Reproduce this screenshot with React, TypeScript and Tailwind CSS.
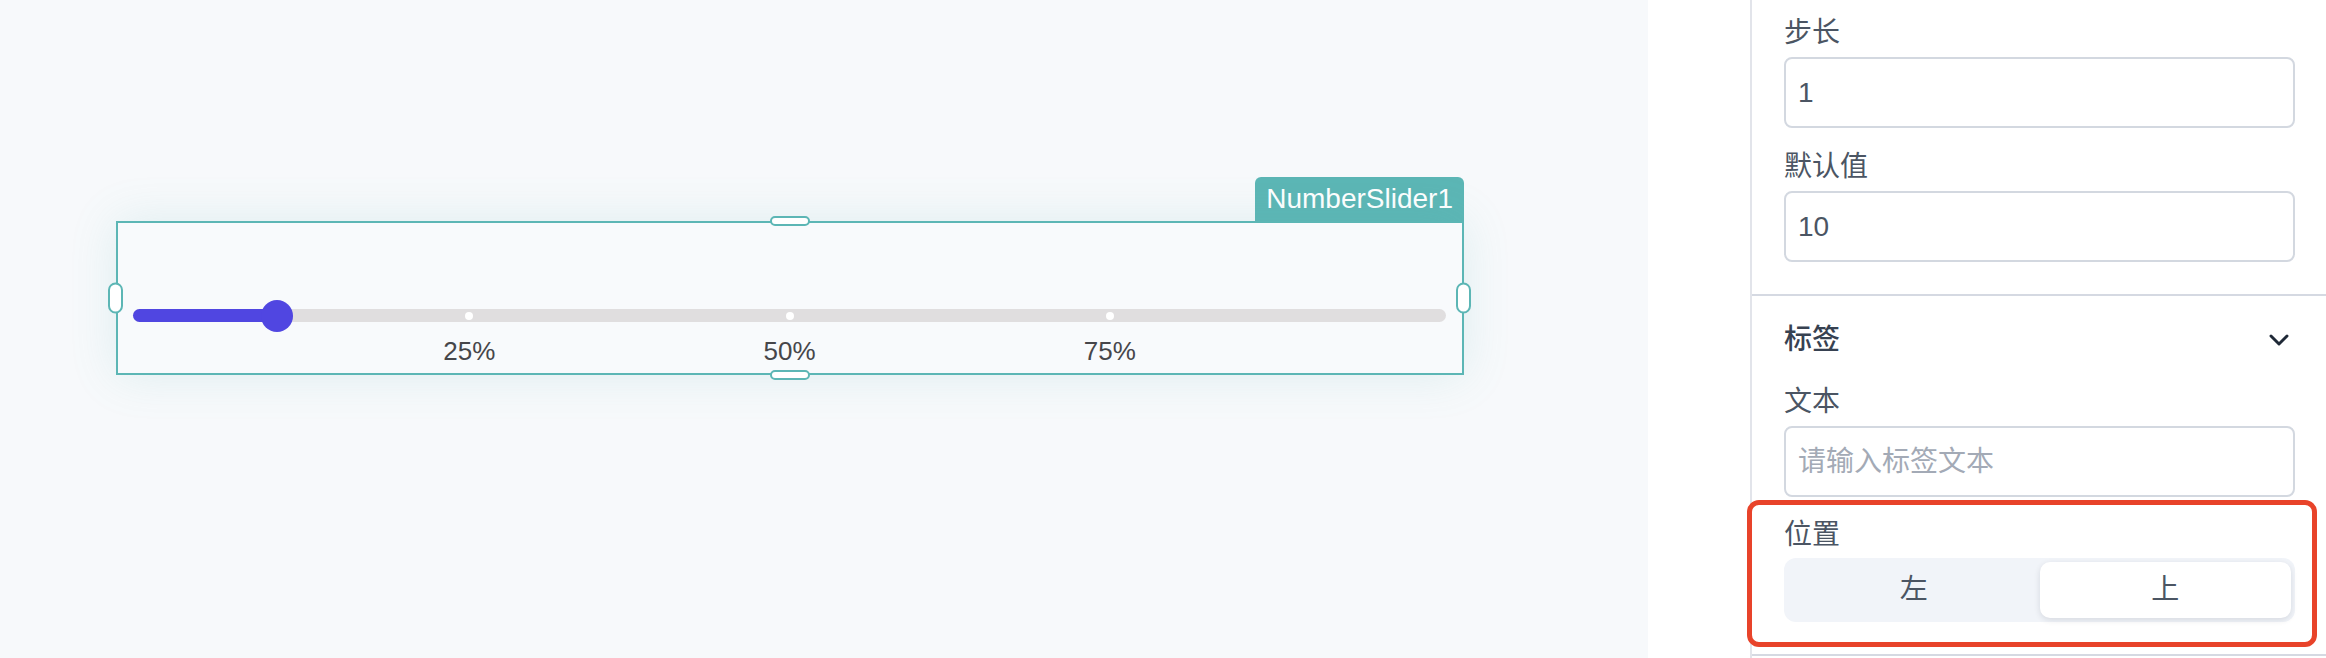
import React from 'react';
import { ChevronDown } from 'lucide-react';

const font = 'font-["Liberation_Sans","Noto_Sans_CJK_SC",sans-serif]';

const marks = [
  { label: '25%', pos: 'left-[25%]' },
  { label: '50%', pos: 'left-[50%]' },
  { label: '75%', pos: 'left-[75%]' },
];

const Handle: React.FC<{ className: string }> = ({ className }) => (
  <div className={`absolute bg-white border-2 border-[#5cb6b5] rounded-full ${className}`} />
);

const SliderWidget: React.FC = () => (
  <div className="w-[1348px]">
    <div className="flex justify-end">
      <div className="h-[44px] px-[11px] flex items-center rounded-t-[6px] bg-[#5cb6b5] text-white text-[28px] leading-none">
        NumberSlider1
      </div>
    </div>
    <div className="relative h-[154px] border-2 border-[#5cb6b5] bg-[#f8fafc] shadow-[0_0_44px_rgba(92,182,181,0.16)] pl-[15px] pr-4 pt-[86px]">
      {/* track */}
      <div className="relative h-[13px] rounded-full bg-[#e0dedf]">
        <div className="absolute inset-y-0 left-4 right-4">
          <div className="absolute inset-y-0 left-[-16px] w-[calc(10%+16px)] rounded-l-full bg-[#5046e1]" />
          {marks.map(m => (
            <div key={m.label} className={`absolute top-1/2 ${m.pos} w-2 h-2 -translate-x-1/2 -translate-y-1/2 rounded-full bg-white`} />
          ))}
          <div className="absolute top-1/2 left-[10%] w-8 h-8 -translate-x-1/2 -translate-y-1/2 rounded-full bg-[#5046e1]" />
        </div>
      </div>
      {/* marks */}
      <div className="relative h-9 mt-[11px]">
        <div className="absolute inset-y-0 left-4 right-4">
          {marks.map(m => (
            <span key={m.label} className={`absolute top-0 ${m.pos} -translate-x-1/2 text-[26px] leading-9 text-[#46464a]`}>
              {m.label}
            </span>
          ))}
        </div>
      </div>

      <Handle className="left-1/2 -translate-x-1/2 top-[-7px] w-10 h-[10px]" />
      <Handle className="left-1/2 -translate-x-1/2 bottom-[-7px] w-10 h-[10px]" />
      <Handle className="top-1/2 -translate-y-1/2 left-[-10px] w-[15px] h-[31px]" />
      <Handle className="top-1/2 -translate-y-1/2 right-[-9px] w-[15px] h-[31px]" />
    </div>
  </div>
);

const Label: React.FC<{ children: React.ReactNode }> = ({ children }) => (
  <div className="h-10 leading-10 text-[28px] text-[#4b5563]">{children}</div>
);

const Input: React.FC<{ value?: string; placeholder?: string }> = ({ value, placeholder }) => (
  <div className="mt-1 h-[71px] rounded-[8px] border-2 border-[#d3d8e0] bg-white pl-3 flex items-center text-[28px]">
    {value ? <span className="text-[#4b5563]">{value}</span> : <span className="text-[#a3aab6]">{placeholder}</span>}
  </div>
);

const PropertyPanel: React.FC = () => (
  <div className="flex-1 flex flex-col">
    <div className="pl-8 pr-[31px] pt-[13px] pb-8 border-b-2 border-[#d5d9e2]">
      <Label>步长</Label>
      <Input value="1" />
      <div className="mt-[19px]">
        <Label>默认值</Label>
      </div>
      <Input value="10" />
    </div>
    <div className="pl-8 pr-[31px] pt-6 pb-8 border-b-2 border-[#d5d9e2]">
      <div className="h-10 flex items-center justify-between">
        <span className="text-[28px] font-medium text-[#374151]">标签</span>
        <ChevronDown size={32} strokeWidth={2.2} className="text-[#1f2937]" />
      </div>
      <div className="mt-[22px]">
        <Label>文本</Label>
      </div>
      <Input placeholder="请输入标签文本" />
      <div className="relative mt-[18px]">
        <Label>位置</Label>
        <div className="mt-[3px] h-16 p-1 grid grid-cols-2 rounded-[12px] bg-[#f1f4f9] text-[28px]">
          <div className="flex items-center justify-center text-[#4b5563]">左</div>
          <div className="flex items-center justify-center rounded-[10px] bg-white text-[#4b5563] shadow-[0_2px_6px_rgba(15,23,42,0.12)]">上</div>
        </div>
        <div className="absolute z-10 left-[-37px] right-[-22px] top-[-15px] bottom-[-25px] rounded-[12px] border-[5px] border-[#e8432a] pointer-events-none" />
      </div>
    </div>
  </div>
);

export default function App() {
  return (
    <div className={`w-[2326px] h-[658px] flex overflow-hidden ${font}`}>
      <div className="w-[1648px] bg-[#f7f9fb] pl-[116px] pt-[177px]">
        <SliderWidget />
      </div>
      <div className="flex-1 flex bg-white">
        <div className="w-[102px]" />
        <div className="w-[2px] bg-[#e2e4ea]" />
        <PropertyPanel />
      </div>
    </div>
  );
}
